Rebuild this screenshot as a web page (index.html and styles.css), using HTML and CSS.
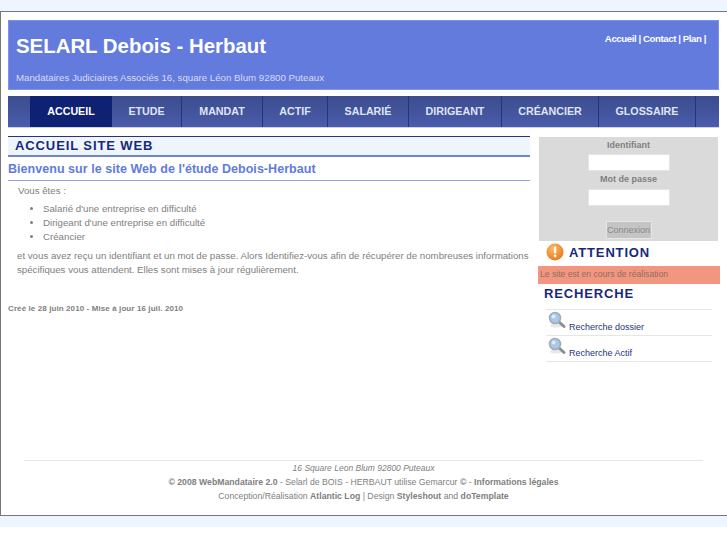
FILE: index.html
```html
<!DOCTYPE html>
<html lang="fr">
<head>
    <meta charset="UTF-8">
    <title>SELARL Debois - Herbaut</title>
    <link rel="stylesheet" href="styles.css">
</head>
<body>

<div class="wrap">

    <!-- Header -->
    <header class="header">
        <div class="brand">
            <h1>SELARL Debois - Herbaut</h1>
            <p>Mandataires Judiciaires Associés 16, square Léon Blum 92800 Puteaux</p>
        </div>
        <div class="toplinks">
            <a href="#">Accueil</a> | <a href="#">Contact</a> | <a href="#">Plan</a> |
        </div>
    </header>

    <!-- Menu -->
    <nav class="menu">
        <a href="#" class="item-accueil active">ACCUEIL</a>
        <a href="#" class="item-etude">ETUDE</a>
        <a href="#" class="item-mandat">MANDAT</a>
        <a href="#" class="item-actif">ACTIF</a>
        <a href="#" class="item-salarie">SALARIÉ</a>
        <a href="#" class="item-dirigeant">DIRIGEANT</a>
        <a href="#" class="item-creancier">CRÉANCIER</a>
        <a href="#" class="item-glossaire">GLOSSAIRE</a>
    </nav>

    <div class="columns">

        <!-- Main Content -->
        <main class="main">
            <h2 class="page-title">ACCUEIL SITE WEB</h2>
            <h3 class="subtitle">Bienvenu sur le site Web de l'étude Debois-Herbaut</h3>
            <p class="intro">Vous êtes :</p>
            <ul class="who">
                <li>Salarié d'une entreprise en difficulté</li>
                <li>Dirigeant d'une entreprise en difficulté</li>
                <li>Créancier</li>
            </ul>
            <p class="text">et vous avez reçu un identifiant et un mot de passe. Alors Identifiez-vous afin de récupérer de nombreuses informations spécifiques vous attendent. Elles sont mises à jour régulièrement.</p>
            <p class="dates">Créé le 28 juin 2010 - Mise à jour 16 juil. 2010</p>
        </main>

        <!-- Sidebar -->
        <aside class="side">
            <form class="login">
                <label for="login">Identifiant</label>
                <input type="text" id="login">
                <label for="pass">Mot de passe</label>
                <input type="password" id="pass" class="pass">
                <button type="button">Connexion</button>
            </form>

            <h2 class="attention">
                <svg class="warn" width="18" height="18" viewBox="0 0 18 18">
                    <defs>
                        <radialGradient id="warnfill" cx="0.4" cy="0.3" r="0.8">
                            <stop offset="0" stop-color="#fbb96b"/>
                            <stop offset="1" stop-color="#e8730f"/>
                        </radialGradient>
                    </defs>
                    <circle cx="9" cy="9" r="8.5" fill="url(#warnfill)"/>
                    <rect x="8" y="3.5" width="2.2" height="7" rx="1" fill="#fff"/>
                    <circle cx="9.1" cy="13" r="1.4" fill="#fff"/>
                </svg>
                ATTENTION
            </h2>
            <p class="notice">Le site est en cours de réalisation</p>

            <h2 class="search-title">RECHERCHE</h2>
            <ul class="search">
                <li>
                    <svg width="18" height="18" viewBox="0 0 18 18">
                        <ellipse cx="8" cy="14.5" rx="6" ry="2" fill="#e9e9e9"/>
                        <line x1="10.5" y1="10.5" x2="16" y2="15.5" stroke="#8a8f96" stroke-width="3" stroke-linecap="round"/>
                        <circle cx="7" cy="7" r="5.5" fill="#a9c8ea" stroke="#a3abb4" stroke-width="1.6"/>
                        <circle cx="5.6" cy="5.4" r="2" fill="#dcebf9"/>
                    </svg>
                    <a href="#">Recherche dossier</a>
                </li>
                <li>
                    <svg width="18" height="18" viewBox="0 0 18 18">
                        <ellipse cx="8" cy="14.5" rx="6" ry="2" fill="#e9e9e9"/>
                        <line x1="10.5" y1="10.5" x2="16" y2="15.5" stroke="#8a8f96" stroke-width="3" stroke-linecap="round"/>
                        <circle cx="7" cy="7" r="5.5" fill="#a9c8ea" stroke="#a3abb4" stroke-width="1.6"/>
                        <circle cx="5.6" cy="5.4" r="2" fill="#dcebf9"/>
                    </svg>
                    <a href="#">Recherche Actif</a>
                </li>
            </ul>
        </aside>
    </div>

    <!-- Footer -->
    <footer class="footer">
        <p><em>16 Square Leon Blum 92800 Puteaux</em></p>
        <p><strong>© 2008 WebMandataire 2.0</strong> - Selarl de BOIS - HERBAUT utilise Gemarcur <strong>©</strong> - <strong>Informations légales</strong></p>
        <p>Conception/Réalisation <strong>Atlantic Log</strong> | Design <strong>Styleshout</strong> and <strong>doTemplate</strong></p>
    </footer>
</div>

</body>
</html>
```

FILE: styles.css
```css
* {
    box-sizing: border-box;
}

html {
    background: #fff;
}

body {
    margin: 0;
    height: 545px;
    overflow: hidden;
    padding-top: 11px;
    font-family: "Liberation Sans", Arial, sans-serif;
    font-size: 9.7px;
    color: #808080;
    background: linear-gradient(#eef5fe, #eef5fe) no-repeat 0 0 / 100% 527px;
}

.wrap {
    height: 505px;
    background: #fff;
    border-top: 1px solid #777;
    border-bottom: 1px solid #777;
    border-left: 1px solid #777;
    padding: 8px 8px 0 7px;
}

/* header */
.header {
    height: 70px;
    background: #627bdd;
    border: 1px solid #7d92e4;
    display: flex;
    justify-content: space-between;
    color: #fff;
}

.brand h1 {
    margin: 0;
    padding: 12px 0 0 7px;
    font-size: 20.4px;
    line-height: 26px;
}

.brand p {
    margin: 13px 0 0 7px;
    font-size: 9.7px;
    line-height: 12px;
    color: #d6dcf7;
}

.toplinks {
    padding: 12px 12px 0 0;
    font-size: 9.6px;
    line-height: 12px;
    font-weight: bold;
    letter-spacing: -0.4px;
}

.toplinks a {
    color: #fff;
    text-decoration: none;
}

/* menu */
.menu {
    height: 32px;
    margin-top: 6px;
    padding-left: 22px;
    display: flex;
    background: linear-gradient(#3d4c8e, #4a5cab);
    border-bottom: 1px solid #c9d2ef;
}

.menu a {
    display: block;
    text-align: center;
    color: #dfe4f4;
    font-size: 10.7px;
    line-height: 30px;
    font-weight: bold;
    text-decoration: none;
    border-right: 1px solid #26347e;
}

.menu a.active {
    background: #0e2173;
    color: #fff;
    border-right: 0;
}

.item-accueil { width: 82px; }
.item-etude { width: 70px; }
.item-mandat { width: 81px; }
.item-actif { width: 65px; }
.item-salarie { width: 81px; }
.item-dirigeant { width: 93px; }
.item-creancier { width: 97px; }
.item-glossaire { width: 97px; }

/* columns */
.columns {
    display: flex;
    height: 316px;
    margin-top: 8px;
}

.main {
    width: 522px;
}

.page-title {
    margin: 0;
    height: 21px;
    padding-left: 7px;
    background: #eef5fe;
    border-top: 1px solid #26347e;
    border-bottom: 2px solid #6f86cf;
    color: #17297b;
    font-size: 13px;
    line-height: 18px;
    letter-spacing: 0.9px;
}

.subtitle {
    margin: 4px 0 0;
    height: 20px;
    border-bottom: 1px solid #8fa3e4;
    color: #627bdd;
    font-size: 12.5px;
    line-height: 17px;
    letter-spacing: 0.04px;
}

.intro {
    margin: 3px 0 0 10px;
    line-height: 14px;
}

.who {
    margin: 4px 0 0;
    padding-left: 35px;
    line-height: 14px;
}

.text {
    margin: 5px 0 0 9px;
    line-height: 14px;
}

.dates {
    margin: 26px 0 0;
    font-size: 8px;
    line-height: 12px;
    font-weight: bold;
    letter-spacing: 0.1px;
}

/* sidebar */
.side {
    width: 181px;
    margin-left: 8px;
}

.login {
    height: 104px;
    margin: 1px 1px 0;
    background: #dadada;
    text-align: center;
    font-size: 9px;
    font-weight: bold;
    padding-top: 3px;
}

.login label {
    display: block;
    line-height: 11px;
}

.login input {
    display: block;
    width: 82px;
    height: 17px;
    margin: 3px auto;
    border: 1px solid #e4e4e4;
    background: #fff;
}

.login input.pass {
    margin-top: 4px;
}

.login button {
    display: block;
    width: 46px;
    height: 18px;
    margin: 15px auto 0;
    padding: 0;
    font-family: "Liberation Sans", Arial, sans-serif;
    font-size: 9px;
    color: #888;
    background: #c4c4c4;
    border: 1px solid #e6e6e6;
}

.attention {
    margin: 0 0 0 8px;
    height: 22px;
    display: flex;
    align-items: center;
    gap: 5px;
    color: #17297b;
    font-size: 13px;
    letter-spacing: 0.85px;
}

.notice {
    margin: 3px -1px 0 0;
    height: 18px;
    background: #f39680;
    font-size: 8.6px;
    line-height: 17px;
    padding-left: 2px;
    color: #8c6f64;
}

.search-title {
    margin: 2px 0 0 6px;
    height: 17px;
    color: #17297b;
    font-size: 13px;
    line-height: 15px;
    letter-spacing: 0.85px;
}

.search {
    list-style: none;
    margin: 6px 0 0 8px;
    padding: 0;
    width: 166px;
}

.search li {
    height: 26px;
    border-top: 1px solid #e6e6e6;
    display: flex;
    align-items: flex-end;
    gap: 3px;
    padding: 0 0 2px 2px;
}

.search li:last-child {
    border-bottom: 1px solid #e6e6e6;
    height: 27px;
}

.search svg {
    margin-bottom: 4px;
}

.search a {
    color: #26347e;
    font-size: 9px;
    line-height: 11px;
    text-decoration: none;
}

/* footer */
.footer {
    margin: 8px 16px 0 16px;
    border-top: 1px solid #e6e6e6;
    text-align: center;
    font-size: 8.7px;
    line-height: 14px;
}

.footer em {
    font-size: 8.5px;
}

.footer p {
    margin: 0;
}
```
